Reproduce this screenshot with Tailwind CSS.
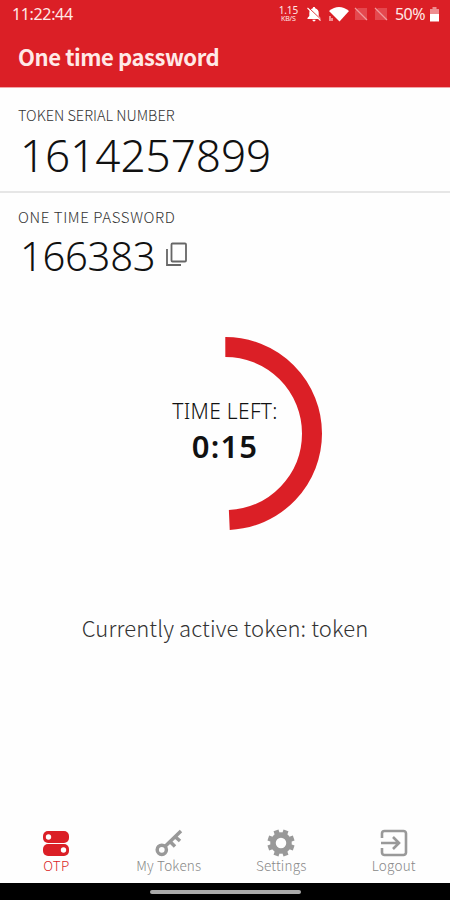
<!DOCTYPE html>
<html lang="en">
<head>
<meta charset="utf-8">
<title>One time password</title>
<script src="https://cdn.jsdelivr.net/npm/@tailwindcss/browser@4"></script>
</head>
<body class="bg-white">
<div class="flex h-[900px] w-[450px] flex-col overflow-hidden bg-[#fefefe] font-['Noto_Sans',sans-serif] whitespace-nowrap">
  <header class="h-[88px] shrink-0 border-b border-[#f2a5a8] bg-[#db1f26] text-[#ffe9e7]">
    <div class="flex h-7 items-center pl-3 pr-[10px]">
      <span class="text-[16px] leading-7 tracking-[-0.35px]">11:22:44</span>
      <div class="ml-auto flex items-center">
        <div class="mr-[7px] w-[21px] text-center text-[10px] leading-[10px] tracking-[-0.1px]"><div>1.15</div><div class="text-[7px] leading-[8px]">KB/S</div></div>
        <svg class="mr-[7px] h-4 w-4" viewBox="0 0 16 16"><path d="M8 1c-.8 0-1.200.5-1.200 1.200C4.400 2.800 3.300 4.500 3.300 7v3L1.500 12v1h13v-1L12.700 10V7c0-2.500-1.200-4.200-3.500-4.800C9.200 1.500 8.800 1 8 1zM6.400 13.800a1.600 1.600 0 0 0 3.200 0z" fill="#fff"/><path d="M2.500 1.500l12.500 12" stroke="#db1f26" stroke-width="1"/><path d="M1.500 2l13 12.500" stroke="#fff" stroke-width="1.100"/></svg>
        <svg class="mr-[5px] h-4 w-5" viewBox="0 0 20 16"><path d="M0 5Q10-3 20 5L10.500 15.500z" fill="#fff"/><path d="M1 10v5M3 12v3" stroke="#ffc9c8" stroke-width="1.300"/></svg>
        <svg class="mr-[6px] h-[14px] w-[14px]" viewBox="0 0 14 14"><path d="M1 13V4l3-3h9v12z" fill="#e4484e"/><path d="M1 1l12 12" stroke="#f09a9c" stroke-width="1.200"/></svg>
        <svg class="mr-[7px] h-[14px] w-[14px]" viewBox="0 0 14 14"><path d="M1 13V4l3-3h9v12z" fill="#e4484e"/><path d="M1 1l12 12" stroke="#f09a9c" stroke-width="1.200"/></svg>
        <span class="mr-1 text-[16px] leading-7 tracking-[-0.5px]">50%</span>
        <svg class="h-4 w-[11px]" viewBox="0 0 11 16"><path d="M3.500 1h4v2H10v5H1V3h2.500z" fill="#ee8d90"/><path d="M1 8h9v7.500H1z" fill="#fff"/></svg>
      </div>
    </div>
    <h1 class="pl-[18px] font-['Noto_Sans_CJK_SC',sans-serif] text-[22px] font-bold leading-[57px] tracking-[-0.42px]">One time password</h1>
  </header>
  <section class="h-[105px] shrink-0 border-b-2 border-[#e6e6e6] pl-[18px] pt-[17px]">
    <div class="font-['Noto_Sans_CJK_SC',sans-serif] text-[14.500px] font-light leading-5 text-[#333]">TOKEN SERIAL NUMBER</div>
    <div class="pl-[2px] text-[44px] font-light leading-[60px] text-[#111]">1614257899</div>
  </section>
  <section class="h-[99px] shrink-0 pl-[18px] pt-[14px]">
    <div class="font-['Noto_Sans_CJK_SC',sans-serif] text-[15px] font-light leading-5 tracking-[0.6px] text-[#333]">ONE TIME PASSWORD</div>
    <div class="flex items-center pl-[2px]">
      <span class="text-[40px] font-light leading-[57px] tracking-[-0.3px] text-[#111]">166383</span>
      <svg class="mb-[2px] ml-[10px] h-[26px] w-[24px]" viewBox="0 0 24 26" fill="none" stroke="#666" stroke-width="1.800"><rect x="6.500" y="1.500" width="14.500" height="18" rx="1"/><path d="M2 7v16h14"/></svg>
    </div>
  </section>
  <main class="flex min-h-0 flex-1 flex-col items-center pt-[42px]">
    <div class="grid h-[196px] w-[196px] place-items-center">
      <svg class="col-start-1 row-start-1 h-[196px] w-[196px]" viewBox="0 0 196 196"><path d="M98.300 13A86.500 86.500 0 0 1 185 99.500A86.500 86.500 0 0 1 102.300 185.900" fill="none" stroke="#db1f26" stroke-width="20"/></svg>
      <div class="col-start-1 row-start-1 text-center text-[#111]">
        <div class="text-[21px] font-light leading-7 tracking-[0.3px]">TIME LEFT:</div>
        <div class="text-[31px] font-semibold leading-[42px] tracking-[1.200px]">0:15</div>
      </div>
    </div>
    <p class="mt-[81px] font-['Noto_Sans_CJK_SC',sans-serif] text-[22px] font-light leading-8 tracking-[0.12px] text-[#333]">Currently active token: token</p>
  </main>
  <nav class="grid h-[60px] shrink-0 grid-cols-4 text-center font-['Noto_Sans_CJK_SC',sans-serif] text-[13.500px] font-light leading-4 tracking-[0.2px] text-[#888]">
    <div class="flex flex-col items-center text-[#db1f26]">
      <svg class="mt-[6px] h-[28px] w-[28px]" viewBox="0 0 28 28"><rect x="1" y="2" width="26" height="12" rx="5" fill="#db1f26"/><rect x="1" y="15" width="26" height="12" rx="5" fill="#db1f26"/><circle cx="6.500" cy="8" r="2.700" fill="#fff"/><circle cx="21.500" cy="21" r="2.700" fill="#fff"/></svg>
      <span>OTP</span>
    </div>
    <div class="flex flex-col items-center">
      <svg class="mt-[6px] h-[28px] w-[28px]" viewBox="0 0 28 28" fill="none" stroke="#999" stroke-width="3.500"><circle cx="6.800" cy="20.800" r="4.600"/><path d="M9.700 17.800L26 2M15 12.500l5 5M20 7.500l5 4.500"/></svg>
      <span>My Tokens</span>
    </div>
    <div class="flex flex-col items-center">
      <svg class="mt-[6px] h-[28px] w-[28px]" viewBox="0 0 28 28"><circle cx="14" cy="14" r="8" fill="none" stroke="#999" stroke-width="5.500"/><g stroke="#999" stroke-width="5.200"><path d="M10.200 4.800L9 1.300M17.800 4.800L19 1.300M10.200 23.200L9 26.700M17.800 23.200L19 26.700M4.800 10.200L1.300 9M4.800 17.800L1.300 19M23.200 10.200L26.700 9M23.200 17.800L26.700 19"/></g></svg>
      <span>Settings</span>
    </div>
    <div class="flex flex-col items-center">
      <svg class="mt-[6px] h-[28px] w-[28px]" viewBox="0 0 28 28" fill="none" stroke="#999" stroke-width="2.600"><path d="M2 9V4.500A2.500 2.500 0 0 1 4.500 2h19A2.500 2.500 0 0 1 26 4.500v19a2.500 2.500 0 0 1-2.500 2.500h-19A2.500 2.500 0 0 1 2 23.500V19M1 14h17M13 8l6 6-6 6"/></svg>
      <span>Logout</span>
    </div>
  </nav>
  <footer class="flex h-[17px] shrink-0 justify-center bg-black pt-[7px]"><div class="h-[4px] w-[151px] rounded-full bg-[#aaa]"></div></footer>
</div>
</body>
</html>
